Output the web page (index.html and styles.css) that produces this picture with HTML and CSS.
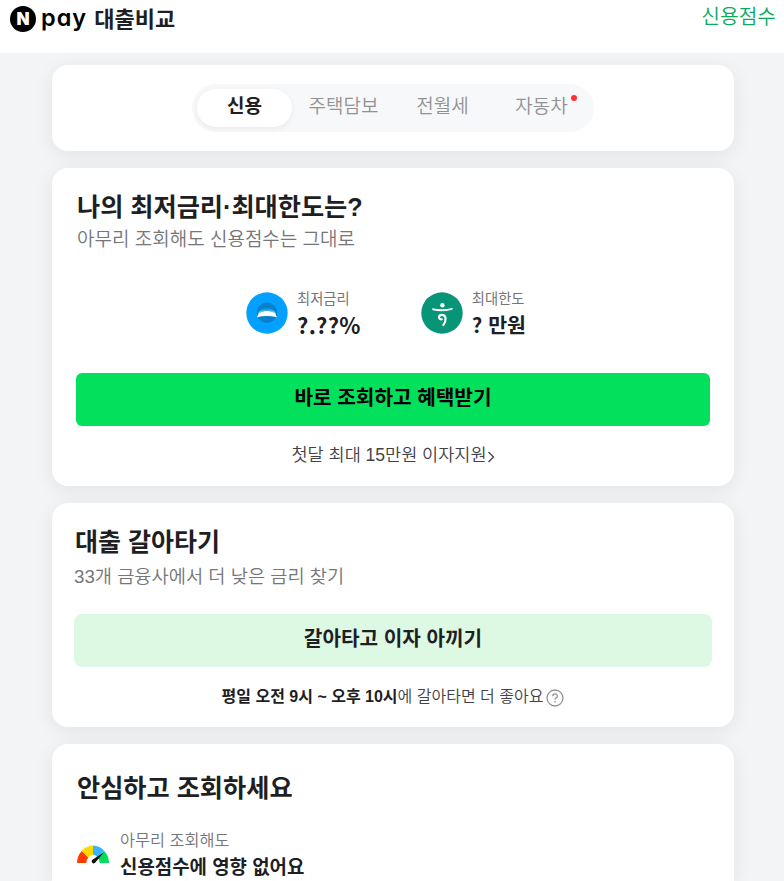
FILE: index.html
```
<!DOCTYPE html>
<html lang="ko">

<head>
    <meta charset="UTF-8">
    <meta name="viewport" content="width=device-width, initial-scale=1.0">
    <title>N pay 대출비교</title>
    <link rel="stylesheet" href="styles.css">
</head>

<body>
    <header class="header">
        <h1 class="logo">
            <span class="logo-mark">N</span>
            <span class="logo-pay">pay</span>
            <span class="logo-title">대출비교</span>
        </h1>
        <a class="score-link" href="#">신용점수</a>
    </header>

    <main class="content">
        <section class="card tab-card">
            <nav class="tabs">
                <a class="tab active" href="#">신용</a>
                <a class="tab" href="#">주택담보</a>
                <a class="tab" href="#">전월세</a>
                <a class="tab" href="#"><span class="new">자동차</span></a>
            </nav>
        </section>

        <section class="card rate-card">
            <h2 class="title">나의 최저금리·최대한도는?</h2>
            <p class="sub">아무리 조회해도 신용점수는 그대로</p>
            <div class="rates">
                <div class="rate">
                    <svg class="rate-icon" viewBox="0 0 42 42">
                        <defs>
                            <linearGradient id="glow" x1="0" y1="0" x2="0" y2="1">
                                <stop offset="0" stop-color="#0781cb" />
                                <stop offset="0.5" stop-color="#39b8ee" />
                                <stop offset="1" stop-color="#fff" />
                            </linearGradient>
                        </defs>
                        <circle cx="21" cy="21" r="20.7" fill="#03a0ff" />
                        <circle cx="21" cy="20.8" r="10.3" fill="#0781cb" />
                        <path d="M12 22.500C14 13.500 28 13.500 30 22.500Z" fill="url(#glow)" />
                        <path d="M11 25.300C13.500 17 28.500 17 31 25.300Q21 22.500 11 25.300Z" fill="#fff" />
                    </svg>
                    <div>
                        <p class="rate-label">최저금리</p>
                        <p class="rate-value percent">?.??%</p>
                    </div>
                </div>
                <div class="rate">
                    <svg class="rate-icon" viewBox="0 0 42 42">
                        <circle cx="21" cy="21" r="20.7" fill="#079477" />
                        <circle cx="21.400" cy="13.200" r="2.200" fill="#fff" />
                        <path d="M11.300 16.300Q21 18.300 31.500 16Q32.300 16.800 31 17.700Q21 20.700 11.800 18.200Q10.800 17.200 11.300 16.300Z" fill="#fff" />
                        <path d="M20.700 27.400C17 27.500 17.200 22.800 20.900 22.800C25.700 22.800 25.300 29.500 22.300 33" fill="none" stroke="#fff" stroke-width="2.200" stroke-linecap="round" />
                    </svg>
                    <div>
                        <p class="rate-label">최대한도</p>
                        <p class="rate-value">? 만원</p>
                    </div>
                </div>
            </div>
            <a class="button" href="#">바로 조회하고 혜택받기</a>
            <a class="benefit" href="#">첫달 최대 15만원 이자지원<svg class="arrow" viewBox="0 0 8 12"><path d="M1.500 1L6.500 6L1.500 11" /></svg></a>
        </section>

        <section class="card switch-card">
            <h2 class="title">대출 갈아타기</h2>
            <p class="sub">33개 금융사에서 더 낮은 금리 찾기</p>
            <a class="button light" href="#">갈아타고 이자 아끼기</a>
            <p class="hours"><span><b>평일 오전 9시 ~ 오후 10시</b>에 갈아타면 더 좋아요</span><svg class="help" viewBox="0 0 18 18">
                    <circle cx="9" cy="9" r="8" />
                    <path d="M6.700 7.300C6.700 4 11.400 4.200 11.400 7C11.400 8.700 9 8.800 9 10.700M9 12V13.400" />
                </svg></p>
        </section>

        <section class="card safe-card">
            <h2 class="title">안심하고 조회하세요</h2>
            <div class="safe-item">
                <svg class="gauge" viewBox="0 0 32 20">
                    <path d="M0 18A16 17.500 0 0 1 4.700 5.900L11.300 12.500A7 8 0 0 0 9.300 18Z" fill="#ff3d00" />
                    <path d="M4.700 5.900A16 17.500 0 0 1 16 .5V9.800A7 8 0 0 0 11.300 12.500Z" fill="#ffd900" />
                    <path d="M16 .5A16 17.500 0 0 1 27.300 5.900L20.700 12.500A7 8 0 0 0 16 9.800Z" fill="#35b5ff" />
                    <path d="M27.300 5.900A16 17.500 0 0 1 32 18H22.700A7 8 0 0 0 20.700 12.500Z" fill="#03dc5a" />
                    <path d="M27 7.200L18.500 17.200A2 2 0 1 1 15.800 14.600Z" fill="#111" />
                </svg>
                <div>
                    <p class="safe-label">아무리 조회해도</p>
                    <p class="safe-text">신용점수에 영향 없어요</p>
                </div>
            </div>
        </section>
    </main>
</body>

</html>
```
FILE: styles.css
```
* {
    box-sizing: border-box;
}

body {
    font-family: "Liberation Sans", "Noto Sans CJK KR", sans-serif;
    margin: 0;
    background-color: #f3f4f6;
    color: #1e1e23;
}

h1,
h2,
p {
    margin: 0;
}

a {
    color: inherit;
    text-decoration: none;
}

.header {
    display: flex;
    justify-content: space-between;
    height: 53px;
    padding: 0 8px 0 10px;
    background: #fff;
}

.logo {
    display: flex;
    align-items: center;
    height: 38px;
}

.logo-mark {
    width: 26px;
    height: 26px;
    border-radius: 50%;
    background: #000;
    color: #fff;
    font: 900 17px/26px Inter, sans-serif;
    text-align: center;
}

.logo-pay {
    margin: -3px 0 0 5px;
    color: #000;
    font: 600 23.500px/26px Inter, sans-serif;
    font-feature-settings: "cv11";
    letter-spacing: 1px;
}

.logo-title {
    margin: -5px 0 0 7px;
    font: bold 22px/32px "Noto Sans CJK KR", sans-serif;
}

.score-link {
    color: #09aa5c;
    font-size: 20.300px;
    font-weight: 350;
    line-height: 35px;
}

.content {
    display: flex;
    flex-direction: column;
    gap: 17px;
    width: 682px;
    margin: 12px 0 0 52px;
}

.card {
    border-radius: 16px;
    background: #fff;
    box-shadow: 0 4px 20px rgba(0, 0, 0, 0.07);
}

.tab-card {
    height: 86px;
    padding-top: 19px;
}

.tabs {
    display: flex;
    width: 402px;
    height: 48px;
    margin-left: 140px;
    padding: 5px;
    border-radius: 24px;
    background: #f7f8fa;
}

.tab {
    flex: 0 0 99px;
    height: 38px;
    padding-left: 4px;
    color: #929294;
    font-size: 19px;
    font-weight: 350;
    line-height: 36px;
    text-align: center;
}

.tab.active {
    flex-basis: 95px;
    padding-left: 0;
    border-radius: 19px;
    background: #fff;
    box-shadow: 0 2px 6px rgba(0, 0, 0, 0.06);
    color: #1e1e23;
    font-weight: bold;
}

.new {
    position: relative;
}

.new::after {
    content: "";
    position: absolute;
    top: -1px;
    right: -9px;
    width: 6px;
    height: 6px;
    border-radius: 50%;
    background: #ff3333;
}

.title {
    font-size: 25.200px;
    line-height: 36px;
}

.sub {
    color: #767678;
    font-size: 19px;
    font-weight: 350;
    line-height: 30px;
}

.rate-card {
    height: 318px;
    padding: 21px 24px 0;
}

.rate-card .title,
.rate-card .sub {
    margin-left: 1px;
}

.rates {
    display: flex;
    gap: 60px;
    height: 118px;
    padding: 33px 0 0 170px;
    font-family: "Noto Sans CJK KR", sans-serif;
}

.rate {
    display: flex;
    gap: 9px;
}

.rate-icon {
    width: 42px;
    height: 42px;
    margin-top: 4px;
}

.rate-label {
    color: #767678;
    font-size: 14.300px;
    line-height: 20px;
}

.rate-value {
    font-size: 20.500px;
    font-weight: bold;
    line-height: 32px;
}

.rate-value.percent {
    font-size: 22px;
    letter-spacing: 0.3px;
}

.button {
    display: block;
    height: 53px;
    border-radius: 6px;
    background: #03e05b;
    color: #000;
    font-size: 20.200px;
    font-weight: bold;
    line-height: 50px;
    text-align: center;
}

.button.light {
    border-radius: 8px;
    background: #ddf9e3;
    color: #1e1e23;
}

.benefit {
    display: flex;
    align-items: center;
    justify-content: center;
    margin-top: 16px;
    color: #424247;
    font-size: 17.500px;
    font-weight: 350;
    line-height: 27px;
}

.arrow {
    width: 8px;
    height: 12px;
    margin-top: 2px;
    fill: none;
    stroke: #424247;
    stroke-width: 1.3;
}

.switch-card {
    height: 224px;
    padding: 21px 22px 0;
}

.switch-card .title {
    margin-left: 1px;
    font-size: 25px;
}

.switch-card .sub {
    margin-top: 2px;
    font-size: 18.700px;
}

.switch-card .button {
    margin-top: 22px;
}

.hours {
    display: flex;
    justify-content: center;
    margin-top: 17px;
    color: #424247;
    font-size: 16px;
    font-weight: 350;
    line-height: 26px;
}

.hours b {
    color: #1e1e23;
    font-weight: bold;
}

.help {
    width: 18px;
    height: 18px;
    margin: 5px 0 0 3px;
    fill: none;
    stroke: #929294;
    stroke-width: 1.3;
}

.safe-card {
    height: 137px;
    padding: 26px 25px 0;
    border-radius: 16px 16px 0 0;
}

.safe-item {
    display: flex;
    gap: 11px;
    margin-top: 21px;
}

.gauge {
    width: 32px;
    height: 20px;
    margin-top: 18px;
}

.safe-label {
    color: #767678;
    font-size: 16.300px;
    font-weight: 350;
    line-height: 27px;
}

.safe-text {
    font-size: 18.900px;
    font-weight: bold;
    line-height: 27px;
}
```
